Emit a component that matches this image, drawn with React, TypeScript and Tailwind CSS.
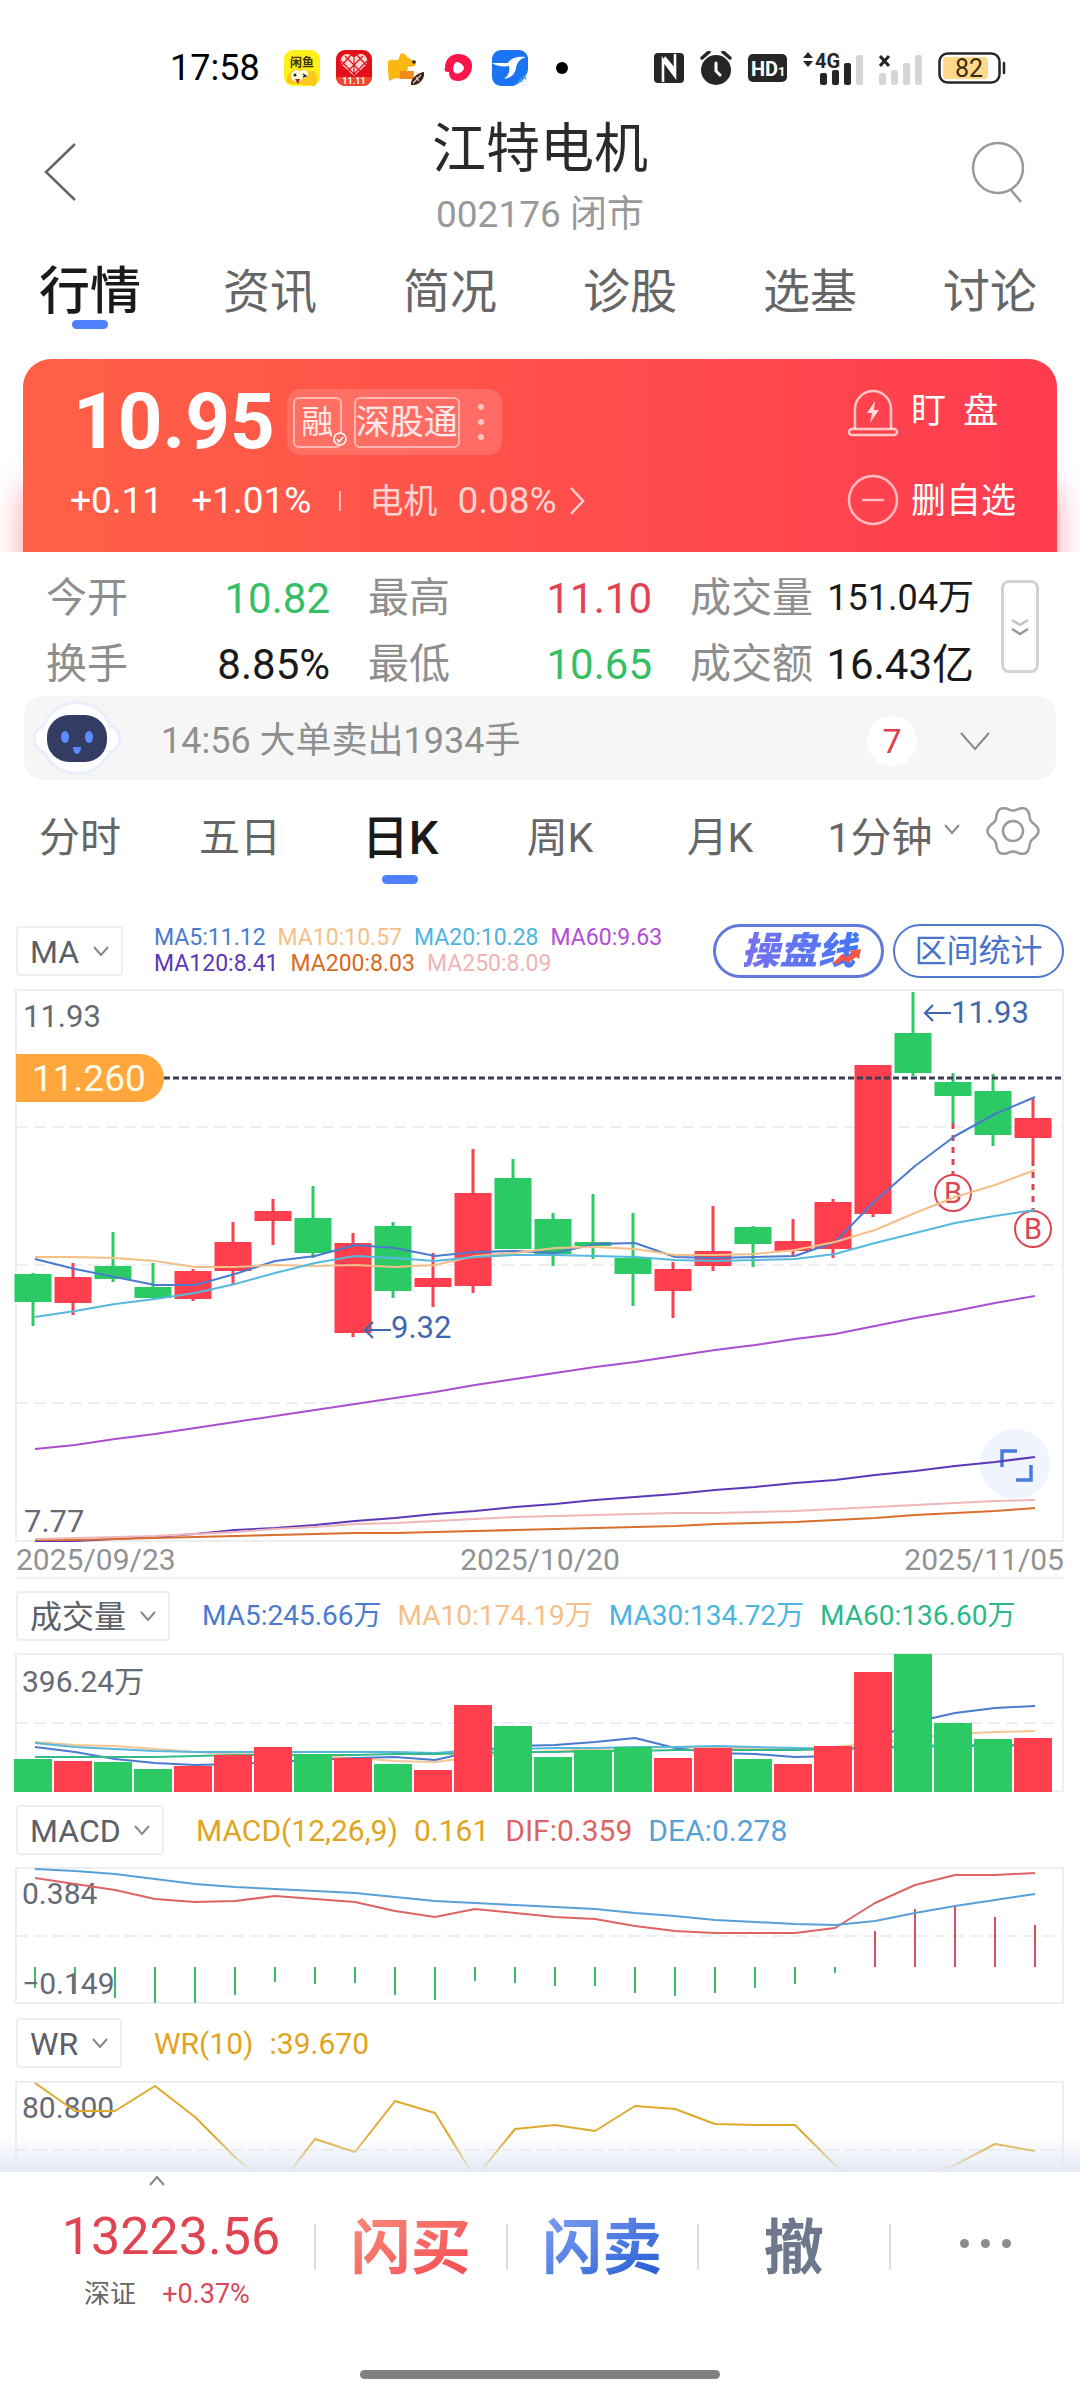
import { ReactNode } from 'react'
import clsx from 'clsx'

const RED = '#ff3e4e'
const GREEN = '#2bca65'

type Candle = { up: boolean; high: number; top: number; bottom: number; low: number; volume: number }

const row = (up: number, high: number, top: number, bottom: number, low: number, volume: number): Candle => ({
  up: up === 1,
  high,
  top,
  bottom,
  low,
  volume,
})

// up/down, high, body top, body bottom, low, volume bar top
const candles: Candle[] = [
  row(0, 293, 294, 322, 346, 179),
  row(1, 283, 297, 323, 335, 181),
  row(0, 252, 286, 299, 302, 182),
  row(0, 283, 307, 318, 319, 189),
  row(1, 289, 291, 319, 321, 186),
  row(1, 242, 262, 291, 304, 175),
  row(1, 219, 231, 241, 265, 167),
  row(0, 206, 238, 273, 278, 174),
  row(1, 253, 263, 353, 357, 178),
  row(0, 242, 246, 311, 318, 184),
  row(1, 273, 298, 307, 327, 190),
  row(1, 169, 213, 306, 313, 125),
  row(0, 179, 198, 269, 269, 146),
  row(0, 233, 239, 274, 286, 177),
  row(0, 214, 262, 266, 279, 170),
  row(0, 233, 278, 294, 326, 167),
  row(1, 282, 289, 311, 338, 178),
  row(1, 226, 271, 286, 291, 168),
  row(0, 246, 247, 264, 287, 179),
  row(1, 239, 261, 271, 277, 184),
  row(1, 219, 222, 269, 278, 166),
  row(1, 85, 85, 234, 237, 92),
  row(0, 12, 53, 93, 96, 74),
  row(0, 93, 102, 116, 143, 143),
  row(0, 94, 111, 155, 166, 159),
  row(1, 119, 138, 158, 180, 158),
]

const priceLines = [
  { color: '#4a7bd0', ys: [279, 289, 297, 305, 305, 294, 281, 276, 265, 268, 276, 272, 271, 273, 264, 263, 277, 278, 277, 276, 262, 221, 186, 156, 134, 117] },
  { color: '#f5bf88', ys: [277, 277, 278, 281, 287, 287, 285, 286, 285, 287, 285, 276, 273, 268, 267, 269, 275, 275, 274, 270, 262, 250, 233, 217, 205, 190] },
  { color: '#57b8de', ys: [337, 331, 324, 319, 313, 304, 293, 283, 276, 278, 281, 277, 275, 275, 276, 277, 280, 281, 280, 279, 274, 263, 253, 243, 236, 230] },
  { color: '#ab4fd0', ys: [469, 465, 459, 454, 448, 442, 436, 430, 424, 418, 412, 405, 399, 393, 387, 382, 376, 370, 365, 359, 354, 346, 338, 331, 323, 316] },
  { color: '#5b38b8', ys: [561, 561, 559, 557, 554, 550, 548, 545, 541, 538, 534, 531, 527, 524, 520, 517, 514, 510, 507, 503, 500, 495, 491, 486, 482, 477] },
  { color: '#d96f2e', ys: [560, 560, 559, 558, 557, 556, 555, 554, 553, 553, 552, 551, 550, 549, 548, 547, 546, 544, 543, 542, 540, 538, 535, 533, 531, 528] },
  { color: '#efb6b8', ys: [559, 558, 557, 556, 554, 552, 549, 547, 544, 543, 541, 539, 537, 536, 535, 534, 533, 533, 532, 531, 529, 527, 525, 523, 521, 520] },
]

const volumeLines = [
  { color: '#f5c693', ys: [162, 165, 166, 169, 172, 174, 175, 176, 178, 181, 182, 177, 173, 171, 169, 168, 167, 168, 168, 169, 167, 163, 158, 154, 152, 151] },
  { color: '#4a7bd0', ys: [167, 172, 179, 183, 185, 184, 182, 180, 178, 177, 180, 171, 166, 165, 162, 158, 168, 173, 174, 177, 176, 159, 142, 133, 128, 126] },
  { color: '#57b8de', ys: [163, 167, 169, 171, 172, 172, 172, 172, 172, 172, 173, 170, 169, 168, 168, 167, 167, 166, 167, 168, 169, 167, 166, 165, 165, 165] },
  { color: '#35b98c', ys: [177, 177, 177, 177, 176, 175, 175, 175, 175, 174, 174, 173, 172, 172, 171, 171, 170, 170, 170, 170, 169, 168, 167, 166, 166, 165] },
]

const macdBars = [168, 174, 178, 183, 183, 175, 162, 164, 163, 175, 180, 161, 163, 166, 166, 173, 176, 173, 168, 164, 153, 111, 89, 85, 97, 105]
const dif = [58, 64, 70, 79, 82, 81, 76, 79, 82, 91, 97, 89, 93, 97, 99, 106, 111, 113, 113, 113, 108, 83, 65, 55, 55, 53]
const dea = [49, 51, 54, 59, 64, 67, 69, 71, 73, 77, 81, 83, 85, 87, 89, 93, 96, 100, 102, 104, 105, 101, 93, 86, 80, 74]
const wr = [263, 291, 291, 266, 297, 337, 371, 319, 332, 281, 293, 358, 309, 305, 311, 286, 289, 304, 305, 305, 345, 383, 357, 345, 324, 331]

function Line({ ys, color }: { ys: number[]; color: string }) {
  const points = ys.map((y, i) => `${35 + i * 40},${y}`).join(' ')
  return <polyline points={points} fill="none" stroke={color} strokeWidth="2" strokeLinejoin="round" />
}

function Frame({ top, bottom, grid }: { top: number; bottom: number; grid: number[] }) {
  return (
    <g stroke="#eceef2" strokeWidth="2" fill="none">
      <rect x="16" y={top} width="1047" height={bottom - top} />
      {grid.map((y) => (
        <line key={y} x1="16" x2="1063" y1={y} y2={y} strokeDasharray="12 6" />
      ))}
    </g>
  )
}

function Chevron({ className, d = 'M1 1l7 8 7-8' }: { className?: string; d?: string }) {
  return (
    <svg viewBox="0 0 16 10" className={className} fill="none" stroke="currentColor" strokeWidth="2">
      <path d={d} vectorEffect="non-scaling-stroke" />
    </svg>
  )
}

function StatusBar() {
  return (
    <div className="flex h-23 items-center pt-11 pr-[74px] pl-[170px] text-[#222]">
      <span className="mr-[24px] text-[36px] leading-12 text-black">17:58</span>
      <div className="flex flex-1 items-center gap-4">
        <svg viewBox="0 0 36 36" className="size-9">
          <rect width="36" height="36" rx="9" fill="#ffef1a" />
          <text x="18" y="17" fontSize="12" fontWeight="700" textAnchor="middle" fill="#3a3200">闲鱼</text>
          <path d="M3 33c-1-8 4-14 12-14 7-1 8 4 15 2 4 3 4 10 1 15z" fill="#ffc91c" />
          <circle cx="13" cy="26" r="6" fill="#fffbe0" />
          <circle cx="20" cy="24" r="4" fill="#fffbe0" />
          <circle cx="11" cy="25" r="1.6" fill="#222" />
          <path d="M19 24l3 2-3 1" stroke="#222" strokeWidth="1.4" fill="none" />
          <path d="M11 29h5l-2 5z" fill="#c31f10" />
        </svg>
        <svg viewBox="0 0 36 36" className="size-9">
          <rect width="36" height="36" rx="9" fill="#e3101c" />
          <path d="M0 27h36a9 9 0 01-9 9H9a9 9 0 01-9-9z" fill="#f2472c" />
          <path d="M18 26L6 15c-3-5 0-11 5-11 3 0 5 2 7 4 2-2 4-4 7-4 5 0 8 6 5 11z" fill="#ffd9d4" />
          <path d="M9 6l16 16M27 6L11 22M5 11l14 14M31 11L17 25M18 8v17M15 5L6 15M21 5l9 10" stroke="#e3101c" strokeWidth="1.2" />
          <text x="18" y="34" fontSize="9" fontWeight="700" textAnchor="middle" fill="#fff">11.11</text>
        </svg>
        <svg viewBox="0 0 36 36" className="size-9">
          <path d="M0 11c4-2 7-1 10-1l3-7 4 1 2 3 9 5-1 4-7 1-1 4h7v8H12l-5-1-6 3-1-10z" fill="#fbb614" />
          <path d="M12 21h13v8H12z" fill="#f58a1c" />
          <circle cx="26" cy="12" r="1.8" fill="#222" />
          <path d="M23 35c-1-6 6-12 13-13 1 6-4 13-11 13z" fill="#402015" />
          <path d="M25 33l8-8M28 27l3 4" stroke="#e8d8cd" strokeWidth="1.2" />
        </svg>
        <svg viewBox="0 0 36 36" className="size-9">
          <path d="M5 18C5 9 11 4 18 4c9 0 15 6 14 13-1 8-6 14-14 14-7 0-9-4-9-9-4 0-5-1-4-4z" fill="#fb1548" />
          <path d="M15 13c2-3 9 2 9 5s-6 7-9 5-2-7 0-10z" fill="#fff" />
        </svg>
        <svg viewBox="0 0 36 36" className="size-9">
          <rect width="36" height="36" rx="9" fill="#1b75f2" />
          <path d="M0 13h16c3-5 9-7 18-6-6 2-9 5-10 11-1 7-6 10-12 11 5-4 6-8 5-13-6 1-13 0-17-3z" fill="#fff" />
          <path d="M36 20v16H21c8-3 13-8 15-16z" fill="#eef7ff" />
          <path d="M26 33l3-4 1 3m2-6l2 3m-4-1l4-3" stroke="#4aa0ef" strokeWidth="1.4" fill="none" />
        </svg>
        <span className="ml-3 size-3 rounded-full bg-black" />
      </div>
      <div className="flex items-center gap-4">
        <svg viewBox="0 0 30 30" className="size-[30px]">
          <rect width="30" height="30" rx="4" fill="#262626" />
          <path d="M9 29V7l12 16V1" stroke="#fff" strokeWidth="2.6" fill="none" />
          <path d="M9 8l12 14v-7L11 3z" fill="#fff" />
        </svg>
        <svg viewBox="0 0 32 34" className="h-[34px] w-8">
          <circle cx="16" cy="19" r="15" fill="#262626" />
          <path d="M2 7l7-6M30 7l-7-6" stroke="#262626" strokeWidth="3.5" strokeLinecap="round" />
          <path d="M16 12v8l4 4" stroke="#fff" strokeWidth="3" fill="none" strokeLinecap="round" />
        </svg>
        <svg viewBox="0 0 39 28" className="h-7 w-[39px]">
          <rect width="39" height="28" rx="5" fill="#262626" />
          <text x="3" y="22" fontSize="20" fontWeight="700" fill="#fff">HD</text>
          <text x="30" y="22" fontSize="13" fontWeight="700" fill="#fff">1</text>
        </svg>
        <svg viewBox="0 0 60 34" className="h-[34px] w-[60px] overflow-visible" fill="#262626">
          <path d="M0 7l5-6 5 6zM0 10l5 6 5-6z" />
          <text x="12" y="17" fontSize="20" fontWeight="700">4G</text>
          <rect x="17" y="22" width="7" height="12" rx="2" />
          <rect x="29" y="19" width="7" height="15" rx="2" />
          <rect x="41" y="12" width="7" height="22" rx="2" />
          <rect x="53" y="4" width="7" height="30" rx="2" fill="#d6d6d6" />
        </svg>
        <svg viewBox="0 0 43 34" className="h-[34px] w-[43px]" fill="#d6d6d6">
          <path d="M1 5l9 10M10 5L1 15" stroke="#262626" strokeWidth="3" />
          <rect x="0" y="22" width="7" height="12" rx="2" />
          <rect x="12" y="19" width="7" height="15" rx="2" />
          <rect x="24" y="12" width="7" height="22" rx="2" />
          <rect x="36" y="4" width="7" height="30" rx="2" />
        </svg>
        <svg viewBox="0 0 68 32" className="h-8 w-[68px]">
          <rect x="1.5" y="1.5" width="60" height="29" rx="8" fill="none" stroke="#262626" strokeWidth="2.5" />
          <rect x="5" y="5" width="45" height="22" rx="4" fill="#ffd98a" />
          <path d="M66 11v10" stroke="#262626" strokeWidth="2.5" strokeLinecap="round" />
          <text x="31" y="25" fontSize="25" textAnchor="middle" fill="#3a2e10">82</text>
        </svg>
      </div>
    </div>
  )
}

function Header() {
  return (
    <header className="flex items-center justify-between pt-[14px] pr-[55px] pl-[43px]">
      <button aria-label="返回" className="w-[66px]">
        <svg viewBox="0 0 34 60" className="h-15 w-[34px]" fill="none" stroke="#666" strokeWidth="2.5">
          <path d="M32 2L3 30l29 28" />
        </svg>
      </button>
      <div className="pt-[2px] text-center">
        <h1 className="text-[54px] leading-21 text-[#2a2a2a]">江特电机</h1>
        <p className="text-[37px] leading-[46px] text-[#999]">002176 闭市</p>
      </div>
      <button aria-label="搜索">
        <svg viewBox="0 0 54 64" className="h-16 w-[54px]" fill="none" stroke="#999" strokeWidth="2.5">
          <circle cx="27" cy="28" r="25" />
          <path d="M40 50l10 12" />
        </svg>
      </button>
    </header>
  )
}

function MainTabs() {
  return (
    <nav className="grid grid-cols-6">
      {['行情', '资讯', '简况', '诊股', '选基', '讨论'].map((tab, i) => (
        <button key={tab} className="flex h-[93px] flex-col items-center pt-[18px]">
          <span className={clsx('leading-[72px]', i === 0 ? 'text-[51px] font-medium text-[#1a1a1a]' : 'text-[47px] text-[#666]')}>
            {tab}
          </span>
          {i === 0 && <span className="-mt-2 h-[9px] w-9 shrink-0 rounded-full bg-[#4f7ffb]" />}
        </button>
      ))}
    </nav>
  )
}

function QuoteCard() {
  return (
    <section className="mt-7 overflow-hidden px-[23px]">
      <div className="flex justify-between rounded-t-[28px] bg-linear-to-r from-[#ff6046] to-[#ff3b4f] pb-[26px] pl-[47px] text-white shadow-[0_120px_30px_#ff3b4f80]">
        <div className="pt-[30px]">
          <div className="flex h-[66px] items-center gap-3">
            <strong className="pl-[3px] text-[78px] leading-[62px] font-bold">10.95</strong>
            <button className="flex h-[66px] items-center rounded-[14px] bg-white/15 px-[6px] text-[34px] leading-none text-white/85">
              <span className="relative mr-3 flex h-[51px] w-[49px] items-center justify-center rounded-md border-2 border-white/50">
                <span className="text-[32px]">融</span>
                <svg viewBox="0 0 14 14" className="absolute -right-[7px] bottom-0 size-[14px]" fill="#ff6f61" stroke="#fff" strokeWidth="1.6">
                  <circle cx="7" cy="7" r="6" />
                  <path d="M4 7l2 3 4-5" fill="none" />
                </svg>
              </span>
              <span className="flex h-[51px] items-center rounded-md border-2 border-white/50">深股通</span>
              <span className="mr-3 ml-[18px] flex flex-col gap-[9px]">
                <i className="size-[6px] rounded-full bg-white/60" />
                <i className="size-[6px] rounded-full bg-white/60" />
                <i className="size-[6px] rounded-full bg-white/60" />
              </span>
            </button>
          </div>
          <div className="mt-[22px] flex h-12 items-center text-[37px]">
            <span>+0.11</span>
            <span className="ml-7">+1.01%</span>
            <i className="mx-7 h-5 w-[2px] bg-white/60" />
            <a href="#sector" className="flex items-center text-white/75">
              <span className="text-[34px]">电机</span>
              <span className="ml-5">0.08%</span>
              <svg viewBox="0 0 16 30" className="ml-3 h-[30px] w-4" fill="none" stroke="currentColor" strokeWidth="2.5">
                <path d="M2 2l12 13L2 28" />
              </svg>
            </a>
          </div>
        </div>
        <div className="flex w-[210px] flex-col gap-9 pt-[27px] text-[35px]">
          <button className="flex h-13 items-center gap-3">
            <svg viewBox="0 0 52 50" className="h-[50px] w-[52px]" fill="none" stroke="#ffffffb3" strokeWidth="2.5">
              <path d="M8 42V22a18 18 0 0136 0v20" />
              <rect x="2" y="42" width="48" height="6" rx="3" />
              <path d="M28 14l-8 12h5l-2 10 9-13h-5z" fill="#ffffffcc" stroke="none" />
            </svg>
            <span className="whitespace-pre">盯  盘</span>
          </button>
          <button className="flex h-13 items-center gap-3">
            <svg viewBox="0 0 52 52" className="size-13" fill="none" stroke="#ffffffa6" strokeWidth="2.5">
              <circle cx="26" cy="26" r="24" />
              <path d="M15 26h22" />
            </svg>
            <span className="pt-1">删自选</span>
          </button>
        </div>
      </div>
    </section>
  )
}

const stats = [
  { label: '今开', value: '10.82', style: 'text-[42px] text-[#35be66]' },
  { label: '最高', value: '11.10', style: 'text-[42px] text-[#e04452]' },
  { label: '成交量', value: '151.04万', style: 'text-[36px] text-[#1a1a1a]' },
  { label: '换手', value: '8.85%', style: 'text-[42px] text-[#1a1a1a]' },
  { label: '最低', value: '10.65', style: 'text-[42px] text-[#35be66]' },
  { label: '成交额', value: '16.43亿', style: 'text-[42px] text-[#1a1a1a]' },
]

function Stats() {
  return (
    <section className="flex items-start gap-[27px] pt-[14px] pr-[41px] pl-[46px]">
      <dl className="grid flex-1 grid-cols-3 gap-x-[38px] gap-y-[2px]">
        {stats.map((s) => (
          <div key={s.label} className="flex h-16 items-center justify-between whitespace-nowrap">
            <dt className="pt-[2px] text-[41px] text-[#8e8e8e]">{s.label}</dt>
            <dd className={s.style}>{s.value}</dd>
          </div>
        ))}
      </dl>
      <button aria-label="展开" className="mt-[14px] flex h-[93px] w-[38px] items-center justify-center rounded-lg border-3 border-[#d2d2d2] text-[#999]">
        <svg viewBox="0 0 20 20" className="size-5" fill="none" stroke="currentColor" strokeWidth="2.5">
          <path d="M2 3l8 5 8-5" opacity=".6" />
          <path d="M2 12l8 5 8-5" />
        </svg>
      </button>
    </section>
  )
}

function AlertBar() {
  return (
    <section className="mx-6 flex h-21 items-center rounded-[20px] bg-[#f6f6f6] pr-[65px] pl-[9px]">
      <svg viewBox="0 0 88 76" className="h-[76px] w-[88px]">
        <ellipse cx="44" cy="38" rx="37" ry="37" fill="#e9effc" />
        <rect x="0" y="24" width="88" height="30" rx="14" fill="#e9effc" />
        <rect x="3" y="27" width="82" height="24" rx="11" fill="#fff" />
        <ellipse cx="44" cy="38" rx="34" ry="34" fill="#fff" />
        <rect x="14" y="15" width="60" height="47" rx="22" fill="#333c63" />
        <ellipse cx="32" cy="37" rx="4" ry="6" fill="#5b8cff" />
        <ellipse cx="56" cy="37" rx="4" ry="6" fill="#5b8cff" />
        <path d="M40 47h8c0 4-2 7-4 7s-4-3-4-7z" fill="#5b8cff" />
      </svg>
      <p className="ml-[40px] flex-1 pt-[6px] text-[36px] text-[#8f8f8f]">14:56 大单卖出1934手</p>
      <span className="mt-[6px] flex size-[50px] items-center justify-center rounded-full bg-white text-[34px] text-[#dd4150]">7</span>
      <button aria-label="展开" className="mt-[6px] ml-[42px] text-[#888]">
        <Chevron className="h-5 w-8" />
      </button>
    </section>
  )
}

// six soft lobes around the centre
const gearPath =
  Array.from({ length: 72 }, (_, i) => {
    const a = (i * Math.PI) / 36
    const r = 23 + 2.5 * Math.cos(6 * a)
    return `${i ? 'L' : 'M'}${(27 + r * Math.cos(a)).toFixed(1)} ${(27 + r * Math.sin(a)).toFixed(1)}`
  }).join('') + 'Z'

function PeriodTabs() {
  return (
    <nav className="flex items-start pr-[40px]">
      <div className="grid flex-1 grid-cols-6">
        {['分时', '五日', '日K', '周K', '月K', '1分钟'].map((tab, i) => (
          <button key={tab} className="relative flex h-26 flex-col items-center gap-[5px] pt-[26px] whitespace-nowrap">
            <span className={clsx('leading-16', i === 2 ? 'text-[47px] font-medium text-[#1a1a1a]' : 'text-[41px] text-[#666]')}>
              {tab}
            </span>
            {i === 2 && <span className="h-[9px] w-9 shrink-0 rounded-full bg-[#4f7ffb]" />}
            {i === 5 && <Chevron className="absolute top-11 right-0 h-[10px] w-4 text-[#888]" />}
          </button>
        ))}
      </div>
      <button aria-label="设置" className="mt-6 ml-[26px]">
        <svg viewBox="0 0 54 54" className="size-[54px]" fill="none" stroke="#999" strokeWidth="2.5">
          <path d={gearPath} />
          <circle cx="27" cy="27" r="10" />
        </svg>
      </button>
    </nav>
  )
}

function IndicatorSelect({ value, label }: { value: string; label: string }) {
  return (
    <div className="relative flex h-[50px] shrink-0 items-center">
      <select
        aria-label={label}
        className="h-full appearance-none rounded-sm border-2 border-[#eceef2] bg-white pr-[41px] pl-[12px] text-[32px] text-[#5c6068]"
      >
        <option>{value}</option>
      </select>
      <Chevron className="pointer-events-none absolute right-[14px] h-[10px] w-4 text-[#888]" />
    </div>
  )
}

function IndicatorHeader({ value, label, children }: { value: string; label: string; children: ReactNode }) {
  return (
    <div className="mt-3 flex items-center gap-8 px-4">
      <IndicatorSelect value={value} label={label} />
      <div className="flex items-center gap-4 whitespace-nowrap">{children}</div>
    </div>
  )
}

function PriceChart() {
  return (
    <svg viewBox="0 8 1080 554" className="mt-[10px] block w-full">
      <Frame top={10} bottom={561} grid={[147, 285, 423]} />
      <circle cx="1015" cy="484" r="35" fill="#f0f4fe" />
      <path d="M1002 487v-16h15M1031 485v15h-15" fill="none" stroke="#4a7bdc" strokeWidth="3.5" />
      <text x="23" y="47" fontSize="31" fill="#666a74">11.93</text>
      <text x="24" y="552" fontSize="31" fill="#666a74">7.77</text>
      {candles.map((c, i) => {
        const x = 33 + i * 40
        const color = c.up ? RED : GREEN
        return (
          <g key={i} fill={color}>
            <rect x={x - 1.5} y={c.high} width="3" height={c.low - c.high} />
            <rect x={x - 18.5} y={c.top} width="37" height={c.bottom - c.top} />
          </g>
        )
      })}
      <g stroke="#dc4553" strokeWidth="2" fill="none">
        <path d="M953 143v51M1033 180v50" strokeWidth="3" strokeDasharray="6 6" />
        <circle cx="953" cy="213" r="18" />
        <circle cx="1033" cy="249" r="18" />
      </g>
      <g fill="#dc4553" fontSize="29" textAnchor="middle">
        <text x="953" y="223">B</text>
        <text x="1033" y="259">B</text>
      </g>
      {priceLines.map((l) => (
        <Line key={l.color} ys={l.ys} color={l.color} />
      ))}
      <path d="M155 98h906" stroke="#3b4055" strokeWidth="3" strokeDasharray="6 3" />
      <path d="M16 74h124a24 24 0 010 48H16z" fill="#ffa63c" />
      <text x="32" y="111" fontSize="37" fill="#fffbe8">11.260</text>
      <g fill="none" stroke="#3f68ae" strokeWidth="2.2">
        <path d="M391 350h-26m8-8l-8 8 8 8" />
        <path d="M951 33h-26m8-8l-8 8 8 8" />
      </g>
      <g fill="#3f68ae" fontSize="31">
        <text x="391" y="358">9.32</text>
        <text x="951" y="43">11.93</text>
      </g>
    </svg>
  )
}

function VolumeChart() {
  return (
    <svg viewBox="0 73 1080 140" className="mt-3 block w-full">
      <Frame top={74} bottom={211} grid={[143]} />
      {volumeLines.map((l) => (
        <Line key={l.color} ys={l.ys} color={l.color} />
      ))}
      {candles.map((c, i) => (
        <rect key={i} x={14 + i * 40} y={c.volume} width="38" height={212 - c.volume} fill={c.up ? RED : GREEN} />
      ))}
      <text x="22" y="112" fontSize="30" fill="#666a74">396.24万</text>
    </svg>
  )
}

function MacdChart() {
  return (
    <svg viewBox="0 47 1080 139" className="mt-3 block w-full">
      <Frame top={48} bottom={183} grid={[116]} />
      {macdBars.map((y, i) => (
        <line key={i} x1={35 + i * 40} x2={35 + i * 40} y1="147" y2={y} stroke={y > 147 ? '#3db96c' : '#d9505c'} strokeWidth="2" />
      ))}
      <text x="22" y="84" fontSize="30" fill="#666a74">0.384</text>
      <text x="22" y="174" fontSize="30" fill="#666a74">−0.149</text>
      <Line ys={dif} color="#dd6464" />
      <Line ys={dea} color="#58a0d8" />
    </svg>
  )
}

function WrChart() {
  return (
    <div className="relative mt-3">
      <svg viewBox="0 260 1080 92" className="block w-full">
        <Frame top={262} bottom={400} grid={[330]} />
        <text x="22" y="298" fontSize="30" fill="#666a74">80.800</text>
        <Line ys={wr} color="#e0a92e" />
      </svg>
      <div className="absolute inset-x-0 bottom-0 h-9 bg-linear-to-b from-transparent to-[#e4eaf5]" />
    </div>
  )
}

function TradeBar() {
  return (
    <footer>
      <div className="flex h-[150px] items-center">
        <a href="#index" className="flex w-[314px] flex-col items-center pl-7">
          <Chevron className="mr-7 mb-[19px] h-[10px] w-5 text-[#888]" d="M1 9l7-8 7 8" />
          <span className="text-[52px] leading-16 text-[#e04452]">13223.56</span>
          <span className="mr-2 flex gap-[26px] leading-[50px]">
            <span className="text-[26px] text-[#666]">深证</span>
            <span className="text-[27px] text-[#d8495a]">+0.37%</span>
          </span>
        </a>
        <div className="grid flex-1 grid-cols-4 text-[60px] leading-none font-bold">
          <button className="flex h-[46px] items-center justify-center border-l-2 border-[#ddd]">
            <span className="bg-linear-to-br from-[#f98d7c] to-[#f4404f] bg-clip-text pt-3 pb-2 text-transparent">闪买</span>
          </button>
          <button className="flex h-[46px] items-center justify-center border-l-2 border-[#ddd]">
            <span className="bg-linear-to-br from-[#86a2f5] to-[#1757cf] bg-clip-text pt-3 pb-2 text-transparent">闪卖</span>
          </button>
          <button className="flex h-[46px] items-center justify-center border-l-2 border-[#ddd] text-[#6d788c]">
            <span className="pt-3 pb-2">撤</span>
          </button>
          <button aria-label="更多" className="flex h-[46px] items-center justify-center gap-3 border-l-2 border-[#ddd] pb-2">
            <i className="size-[9px] rounded-full bg-[#8c8c8c]" />
            <i className="size-[9px] rounded-full bg-[#8c8c8c]" />
            <i className="size-[9px] rounded-full bg-[#8c8c8c]" />
          </button>
        </div>
      </div>
      <div className="mx-auto mt-12 mb-[21px] h-[9px] w-1/3 rounded-full bg-[#808080]" />
    </footer>
  )
}

export default function App() {
  return (
    <main className="bg-white font-['Roboto','Noto_Sans_CJK_SC',sans-serif]">
      <StatusBar />
      <Header />
      <MainTabs />
      <QuoteCard />
      <Stats />
      <AlertBar />
      <PeriodTabs />

      <div className="mt-10 flex items-center px-4">
        <IndicatorSelect value="MA" label="主图指标" />
        <div className="ml-[31px] flex-1 text-[23px] leading-[26px] whitespace-nowrap">
          <p className="flex gap-3">
            <span className="text-[#4a7bd0]">MA5:11.12</span>
            <span className="text-[#f5bf88]">MA10:10.57</span>
            <span className="text-[#4bb5e0]">MA20:10.28</span>
            <span className="text-[#b34dd6]">MA60:9.63</span>
          </p>
          <p className="flex gap-3">
            <span className="text-[#5b38b8]">MA120:8.41</span>
            <span className="text-[#d96a1e]">MA200:8.03</span>
            <span className="text-[#f0b4b6]">MA250:8.09</span>
          </p>
        </div>
        <div className="flex gap-[9px]">
          <button className="relative flex h-[54px] w-[171px] items-center justify-center rounded-full border-3 border-[#6079dc] text-[38px] leading-none">
            <span className="bg-linear-to-r from-[#7a70ee] to-[#3f78f8] bg-clip-text px-1 font-black text-transparent italic">操盘线</span>
            <svg viewBox="0 0 28 16" className="absolute right-[20px] bottom-[10px] h-4 w-7" fill="#f4574a">
              <path d="M0 14l9-9 5 3 5-4-3-2 12-2-2 10-3-2-8 6-5-3-5 4z" />
            </svg>
          </button>
          <button className="flex h-[54px] w-[171px] items-center justify-center rounded-full border-2 border-[#4f78cc] text-[32px] leading-none text-[#4a74cc]">
            区间统计
          </button>
        </div>
      </div>

      <PriceChart />
      <div className="mx-4 flex justify-between border-b-2 border-[#f1f1f3] text-[30px] leading-[35px] text-[#929292]">
        <time>2025/09/23</time>
        <time>2025/10/20</time>
        <time>2025/11/05</time>
      </div>

      <IndicatorHeader value="成交量" label="成交量指标">
        <div className="flex gap-4 text-[28px]">
          <span className="text-[#4a7bd0]">MA5:245.66万</span>
          <span className="text-[#f5bf88]">MA10:174.19万</span>
          <span className="text-[#4bb5e0]">MA30:134.72万</span>
          <span className="text-[#2bb98a]">MA60:136.60万</span>
        </div>
      </IndicatorHeader>
      <VolumeChart />

      <IndicatorHeader value="MACD" label="副图指标一">
        <div className="flex gap-4 text-[30px]">
          <span className="text-[#e0a51e]">MACD(12,26,9)</span>
          <span className="text-[#e0a51e]">0.161</span>
          <span className="text-[#dd6464]">DIF:0.359</span>
          <span className="text-[#58a0d8]">DEA:0.278</span>
        </div>
      </IndicatorHeader>
      <MacdChart />

      <IndicatorHeader value="WR" label="副图指标二">
        <div className="flex gap-4 text-[30px] text-[#e0a51e]">
          <span>WR(10)</span>
          <span>:39.670</span>
        </div>
      </IndicatorHeader>
      <WrChart />
      <TradeBar />
    </main>
  )
}
